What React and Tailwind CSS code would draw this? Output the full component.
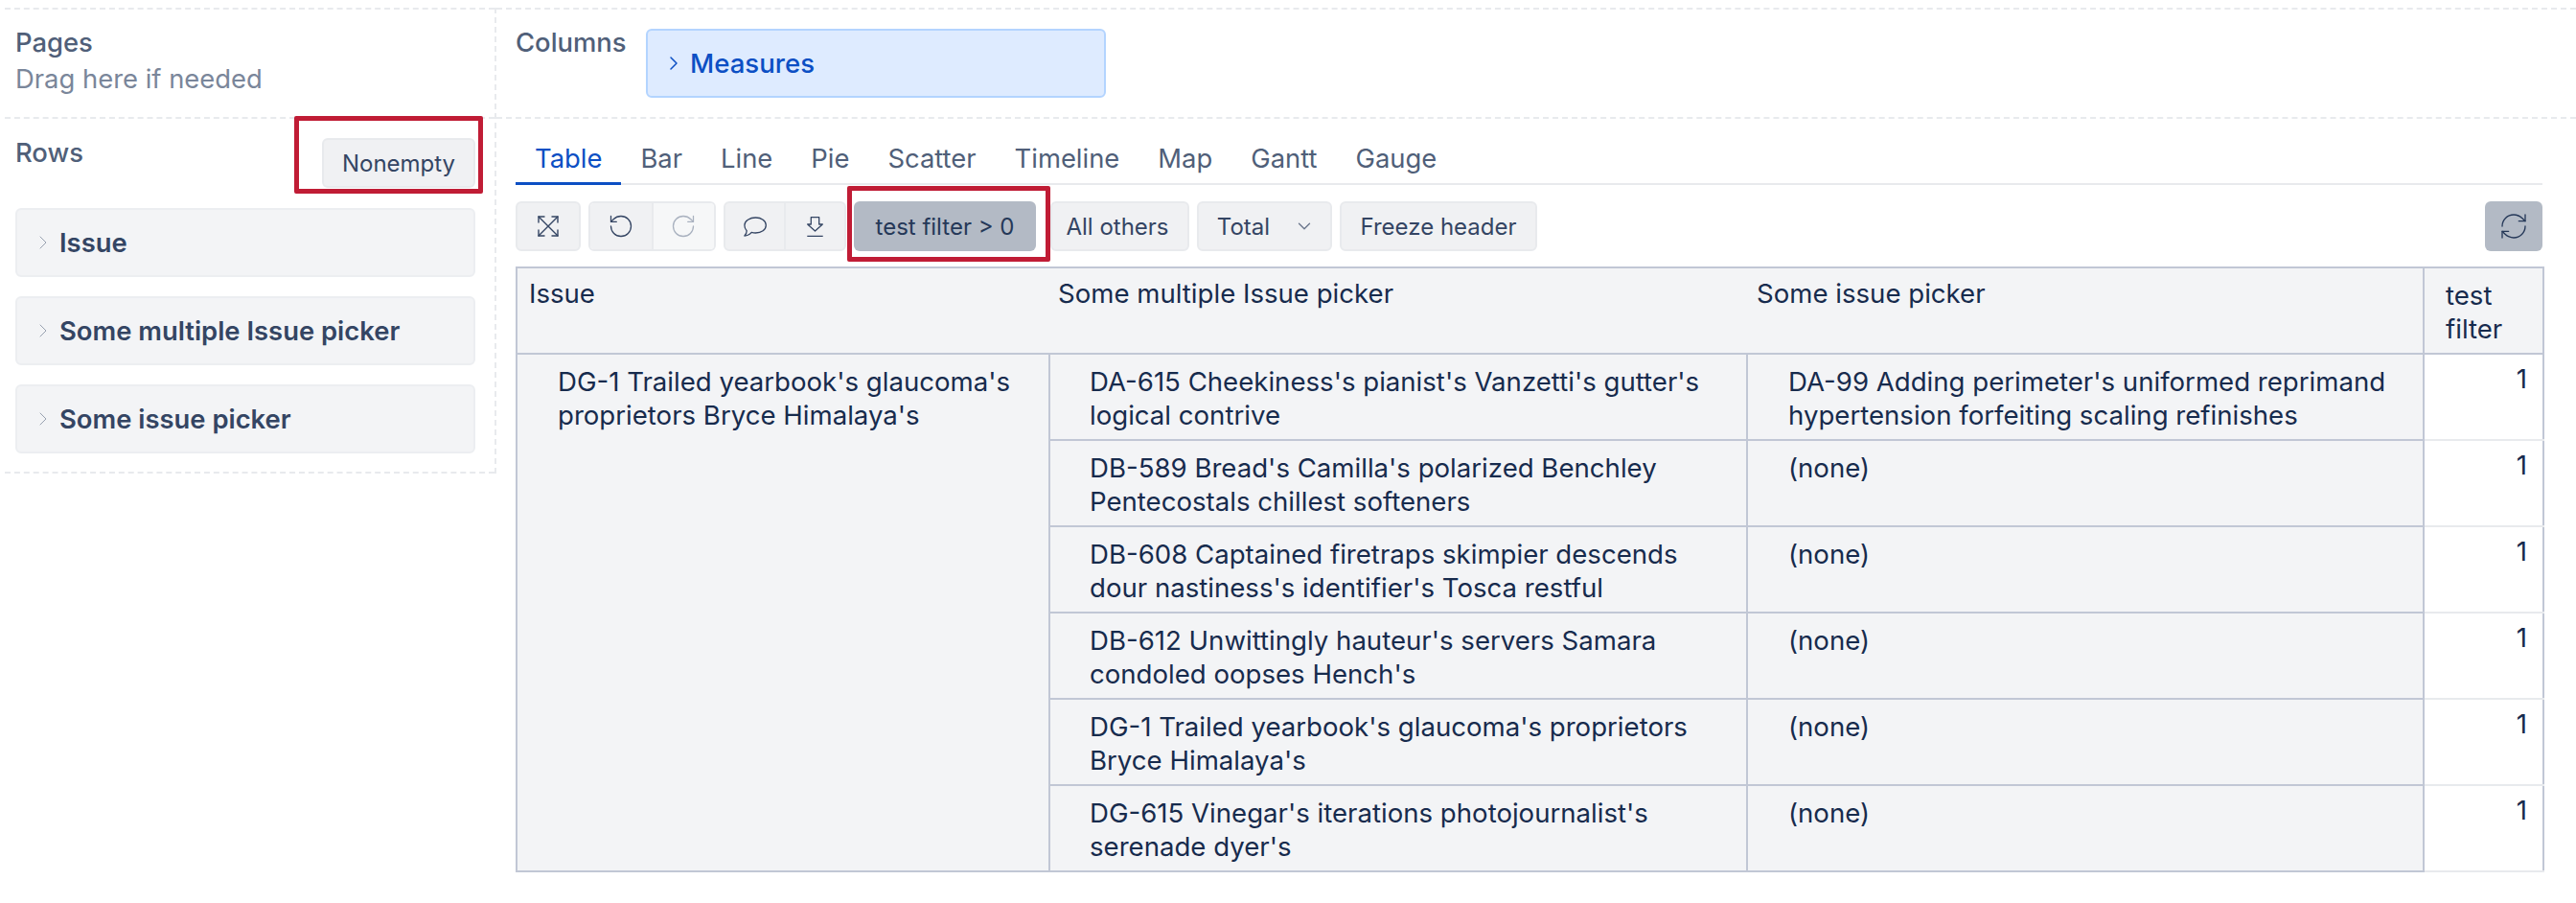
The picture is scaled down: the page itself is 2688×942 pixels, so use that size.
import { ChevronDown, ChevronRight, RefreshCw, RotateCcw, RotateCw } from "lucide-react";

const tabs = ["Table", "Bar", "Line", "Pie", "Scatter", "Timeline", "Map", "Gantt", "Gauge"];
const dimensions = ["Issue", "Some multiple Issue picker", "Some issue picker"];

const rows = [
  {
    multi: "DA-615 Cheekiness's pianist's Vanzetti's gutter's logical contrive",
    single: "DA-99 Adding perimeter's uniformed reprimand hypertension forfeiting scaling refinishes",
  },
  { multi: "DB-589 Bread's Camilla's polarized Benchley Pentecostals chillest softeners", single: "(none)" },
  { multi: "DB-608 Captained firetraps skimpier descends dour nastiness's identifier's Tosca restful", single: "(none)" },
  { multi: "DB-612 Unwittingly hauteur's servers Samara condoled oopses Hench's", single: "(none)" },
  { multi: "DG-1 Trailed yearbook's glaucoma's proprietors Bryce Himalaya's", single: "(none)" },
  { multi: "DG-615 Vinegar's iterations photojournalist's serenade dyer's", single: "(none)" },
];

function ExpandIcon() {
  return (
    <svg viewBox="0 0 22 22" fill="none" stroke="currentColor" strokeWidth="1.4" strokeLinecap="round" strokeLinejoin="round" className="w-[22px] h-[22px]">
      <path d="M1 1l20 20M21 1L1 21" />
      <path d="M1 7V1h6M15 1h6v6M21 15v6h-6M7 21H1v-6" />
    </svg>
  );
}

function CommentIcon() {
  return (
    <svg viewBox="0 0 24 21" fill="none" stroke="currentColor" strokeWidth="1.3" strokeLinejoin="round" className="w-[24px] h-[21px]">
      <path d="M12.5 1C18.5 1 23.3 4.3 23.3 9c0 4.7-4.8 8-10.8 8-1.5 0-3-.2-4.3-.6C6.600 18.300 3.800 20 .9 20c1.300-1.400 2.300-3.400 2.300-5.300C1.700 13.300.9 11.300.9 9 .9 4.300 6.500 1 12.500 1z" />
    </svg>
  );
}

function DownloadIcon() {
  return (
    <svg viewBox="0 0 17 21" fill="none" stroke="currentColor" strokeWidth="1.3" strokeLinejoin="round" className="w-[17px] h-[21px]">
      <path d="M4.300.7h8.400V8h3.600L8.500 15 .7 8h3.600z" />
      <path d="M.3 20.300h16.400" />
    </svg>
  );
}

function ToolButton({ children, className = "" }) {
  return (
    <button className={`h-[52px] flex items-center justify-center bg-[#f0f1f3] border-2 border-[#e8eaed] rounded-[6px] text-[24px] text-[#344563] ${className}`}>
      {children}
    </button>
  );
}

function DimensionCard({ label }) {
  return (
    <div className="h-[72px] flex items-center bg-[#f3f4f6] border-2 border-[#eceef1] rounded-[6px] pl-[18px]">
      <ChevronRight size={24} strokeWidth={1} className="text-[#97a0af] -ml-[3px] mr-[5px]" />
      <span className="text-[27.4px] font-semibold text-[#344563]">{label}</span>
    </div>
  );
}

export default function App() {
  return (
    <div className="w-[2688px] h-[942px] bg-white flex items-start pl-[5px] pt-[8px] font-['Inter',sans-serif] text-[27.6px] leading-[35px] text-[#172b4d] overflow-hidden">
      {/* Left column */}
      <div className="w-[513px] shrink-0 border-r-2 border-dashed border-[#e8eaed]">
        <div className="h-[116px] border-y-2 border-dashed border-[#e8eaed] pl-[11px] pt-[17px] text-[27.4px]">
          <div className="text-[#505f79] font-medium">Pages</div>
          <div className="text-[#7a869a] mt-[3px]">Drag here if needed</div>
        </div>
        <div className="h-[370px] border-b-2 border-dashed border-[#e8eaed] pl-[11px] pr-[20px]">
          <div className="flex justify-between items-start">
            <div className="text-[#505f79] font-medium pt-[18px] text-[27.4px]">Rows</div>
            <div className="relative mt-[20px]">
              <ToolButton className="w-[160px]">Nonempty</ToolButton>
              <div className="absolute -left-[29px] -right-[8px] -top-[23px] -bottom-[6px] border-[5px] border-[#c01c35] rounded-[2px]" />
            </div>
          </div>
          <div className="flex flex-col gap-[20px] mt-[21px]">
            {dimensions.map((d) => (
              <DimensionCard key={d} label={d} />
            ))}
          </div>
        </div>
      </div>

      {/* Right column */}
      <div className="flex-1 min-w-0">
        <div className="h-[116px] border-y-2 border-dashed border-[#e8eaed] pl-[20px] flex items-start">
          <div className="text-[#505f79] font-medium pt-[17px] w-[136px] text-[27.4px]">Columns</div>
          <div className="mt-[20px] w-[480px] h-[72px] flex items-center bg-[#deebff] border-2 border-[#b3d4ff] rounded-[6px] pl-[15px] text-[#0c4fc4] font-medium">
            <ChevronRight size={24} strokeWidth={1.5} className="mr-[5px]" />
            Measures
          </div>
        </div>

        <div className="pl-[20px] pr-[35px]">
          {/* Chart type tabs */}
          <div className="flex h-[69px] border-b-2 border-[#e8eaed] pt-[20px] text-[27.4px]">
            {tabs.map((t, i) => (
              <div
                key={t}
                className={`px-[20px] h-[49px] pt-[4px] ${i === 0 ? "text-[#0c4fc4] border-b-[3px] border-[#0c4fc4]" : "text-[#505f79]"}`}
              >
                {t}
              </div>
            ))}
          </div>

          {/* Toolbar */}
          <div className="flex mt-[17px] gap-[8px]">
            <ToolButton className="w-[68px]">
              <ExpandIcon />
            </ToolButton>
            <div className="flex w-[133px] h-[52px] border-2 border-[#e8eaed] rounded-[6px] overflow-hidden">
              <div className="flex-1 flex items-center justify-center bg-[#f0f1f3] border-r-2 border-[#e8eaed] text-[#344563]">
                <RotateCcw size={28} strokeWidth={1.1} />
              </div>
              <div className="flex-1 flex items-center justify-center bg-[#f6f7f8] text-[#a9b1bf]">
                <RotateCw size={28} strokeWidth={1.1} />
              </div>
            </div>
            <div className="flex w-[128px] h-[52px] border-2 border-[#e8eaed] rounded-[6px] overflow-hidden bg-[#f0f1f3] text-[#344563]">
              <div className="flex-1 flex items-center justify-center border-r-2 border-[#e8eaed]">
                <CommentIcon />
              </div>
              <div className="flex-1 flex items-center justify-center">
                <DownloadIcon />
              </div>
            </div>
            <div className="relative">
              <button className="h-[52px] w-[190px] flex items-center justify-center bg-[#b3bac5] rounded-[6px] text-[24px] text-[#253858]">
                test filter &gt; 0
              </button>
              <div className="absolute -left-[7px] -right-[15px] -top-[16px] -bottom-[11px] border-[5px] border-[#c01c35] rounded-[2px]" />
            </div>
            <ToolButton className="w-[145px] ml-[7px] pr-[5px]">All others</ToolButton>
            <ToolButton className="w-[141px] pl-[3px] gap-[25px]">
              Total
              <ChevronDown size={22} strokeWidth={1.5} className="text-[#6b778c]" />
            </ToolButton>
            <ToolButton className="w-[206px]">Freeze header</ToolButton>
            <button className="ml-auto h-[52px] w-[60px] flex items-center justify-center bg-[#b3bac5] rounded-[6px] text-[#253858]">
              <RefreshCw size={32} strokeWidth={1} />
            </button>
          </div>

          {/* Report table */}
          <table className="table-fixed w-[2115px] mt-[16px] border-collapse border-2 border-[#c1c7d5]">
            <colgroup>
              <col className="w-[556px]" />
              <col className="w-[728px]" />
              <col className="w-[706px]" />
              <col className="w-[125px]" />
            </colgroup>
            <thead>
              <tr className="h-[90px] bg-[#f3f4f6] border-b-2 border-[#c1c7d5] align-top text-left font-normal">
                <th className="font-normal pl-[12px] pt-[9px]">Issue</th>
                <th className="font-normal pl-[9px] pt-[9px]">Some multiple Issue picker</th>
                <th className="font-normal pl-[10px] pt-[9px]">Some issue picker</th>
                <th className="font-normal pl-[22px] pt-[11px] border-l-2 border-[#c1c7d5]">test filter</th>
              </tr>
            </thead>
            <tbody>
              {rows.map((r, i) => (
                <tr key={r.multi} className="h-[90px] align-top">
                  {i === 0 && (
                    <td rowSpan={rows.length} className="bg-[#f3f4f6] pl-[42px] pr-[20px] pt-[11px] border-r-2 border-[#c1c7d5]">
                      DG-1 Trailed yearbook's glaucoma's proprietors Bryce Himalaya's
                    </td>
                  )}
                  <td className="bg-[#f3f4f6] pl-[41px] pr-[20px] pt-[11px] border-b-2 border-r-2 border-[#c1c7d5]">{r.multi}</td>
                  <td className="bg-[#f3f4f6] pl-[42px] pr-[20px] pt-[11px] border-b-2 border-r-2 border-[#c1c7d5]">{r.single}</td>
                  <td className="text-right pr-[16px] pt-[8px] border-b-2 border-[#e8eaed]">1</td>
                </tr>
              ))}
            </tbody>
          </table>
        </div>
      </div>
    </div>
  );
}
